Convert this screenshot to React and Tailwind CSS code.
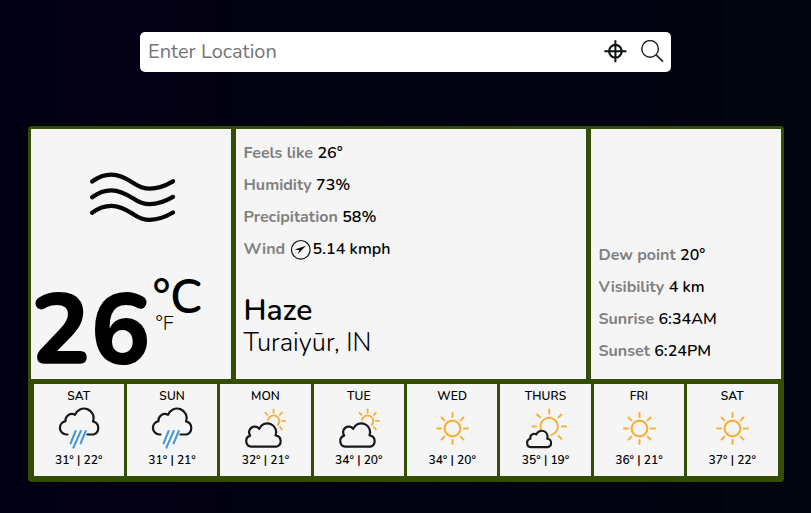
const CLOUD =
  "M9 27.5H8A6.7 6.7 0 0 1 7 14.2A6.5 6.5 0 0 1 16.5 7.8A9.4 9.4 0 0 1 34.5 14.4A6.8 6.8 0 0 1 35 27.5H29";

const RAYS = [0, 45, 90, 135, 180, 225, 270, 315];

function Rain() {
  return (
    <svg width="42" height="42" viewBox="0 0 42 42" fill="none" strokeLinecap="round">
      <path d={CLOUD} transform="translate(.5 0)" stroke="#16181a" strokeWidth="2.2" strokeLinejoin="round" />
      <path d="M17.6 24L12.6 36.3M22.8 24L15.4 40.6M27.8 24L22.6 36.3" stroke="#4a97d2" strokeWidth="2.1" />
    </svg>
  );
}

function Sun() {
  return (
    <svg width="42" height="42" viewBox="0 0 42 42" fill="none" stroke="#f6b03c" strokeLinecap="round">
      <circle cx="21.5" cy="21.5" r="7.9" strokeWidth="2.2" />
      {RAYS.map((a) => (
        <path key={a} d="M21.5 6V10" strokeWidth="2" transform={`rotate(${a} 21.5 21.5)`} />
      ))}
    </svg>
  );
}

function MostlyCloudy() {
  return (
    <svg width="42" height="42" viewBox="0 0 42 42" fill="none" strokeLinecap="round" strokeLinejoin="round">
      <g stroke="#f6b03c" strokeWidth="1.9">
        <path d="M24 13.2A5.7 5.7 0 1 1 33.8 18" />
        <path d="M29.6 2.5V5.7M21.4 5.7L23.3 7.8M37.9 5.7L35.9 7.8M38 13.9H40.9M35.9 20.2L37.8 22.3" />
      </g>
      <path
        d="M7.4 39.7A5.7 5.7 0 0 1 6.2 28.6A5.6 5.6 0 0 1 15.2 21.9A8 8 0 0 1 31.5 28.3A5.8 5.8 0 0 1 32.2 39.7Z"
        stroke="#16181a"
        strokeWidth="2.2"
      />
    </svg>
  );
}

function PartlySunny() {
  return (
    <svg width="42" height="42" viewBox="0 0 42 42" fill="none" strokeLinecap="round" strokeLinejoin="round">
      <g stroke="#f6b03c" strokeWidth="2">
        <path d="M15.8 22A8.7 8.7 0 1 1 26.2 28" />
        <path d="M24.2 2.5V6.5M12.2 7.5L14.9 10.2M36.4 7.5L33.7 10.2M7.2 19.6H11.2M37 19.6H41M33.7 29L36.4 31.7" />
      </g>
      <path
        d="M6.2 40.1A4.2 4.2 0 0 1 5.4 31.8A4 4 0 0 1 11.3 27.4A5.6 5.6 0 0 1 22.2 31.8A4.2 4.2 0 0 1 22.7 40.1Z"
        stroke="#16181a"
        strokeWidth="2.1"
      />
    </svg>
  );
}

const DAYS = [
  { day: "SAT", icon: Rain, t: "31° | 22°" },
  { day: "SUN", icon: Rain, t: "31° | 21°" },
  { day: "MON", icon: MostlyCloudy, t: "32° | 21°" },
  { day: "TUE", icon: MostlyCloudy, t: "34° | 20°" },
  { day: "WED", icon: Sun, t: "34° | 20°" },
  { day: "THURS", icon: PartlySunny, t: "35° | 19°" },
  { day: "FRI", icon: Sun, t: "36° | 21°" },
  { day: "SAT", icon: Sun, t: "37° | 22°" },
];

function Stat({ label, value, children }) {
  return (
    <div className="flex h-8 items-center gap-[4.4px] text-[16px] font-bold">
      <span className="text-[#808080]">{label}</span>
      <div className="flex items-center gap-[2px]">
        {children}
        <span className="font-semibold tracking-[0.05px] text-black">{value}</span>
      </div>
    </div>
  );
}

export default function App() {
  return (
    <main className="flex h-[513px] w-[811px] flex-col items-center overflow-hidden bg-linear-to-r from-[#030014] to-[#00050f] pt-8 font-['Nunito',sans-serif]">
      <div className="flex h-10 w-[531px] items-center rounded-[5px] bg-white pr-[7px] pl-2">
        <span className="text-[20px] leading-10 text-[#757575]">Enter Location</span>
        <svg className="ml-auto" width="24" height="24" viewBox="0 0 24 24" fill="none" stroke="#101314">
          <circle cx="12.4" cy="11.2" r="6.3" strokeWidth="2.2" />
          <path d="M12.4 .2V22.2M1.4 11.2H23.4" strokeWidth="2" />
        </svg>
        <svg className="ml-[13px]" width="24" height="24" viewBox="0 0 24 24" fill="none" stroke="#26292a" strokeWidth="1.5">
          <circle cx="10.1" cy="8.9" r="8.3" />
          <path d="M16.1 14.8L23 21.6" strokeWidth="1.8" />
        </svg>
      </div>

      <section className="mt-[54px] flex h-[356px] w-[756px] flex-col rounded-[4px] bg-[#344d05] p-[3px]">
        <div className="flex h-[250px] gap-[5px]">
          <div className="flex w-[200px] flex-col bg-[#f5f5f5]">
            <svg className="mt-[41px] ml-[57px]" width="90" height="56" viewBox="0 0 90 56" fill="none" stroke="#050708" strokeWidth="4.3" strokeLinecap="round">
              {[0, 15.6, 31.2].map((dy) => (
                <path
                  key={dy}
                  transform={`translate(-.4 ${dy})`}
                  d="M4.5 11.6C10 7.6 16 4.7 23.7 4.7C31 4.7 38 8 45.3 12.7C51 16.6 56 18.6 62.3 18.6C70 18.6 78 15.6 85.4 11.3"
                />
              ))}
            </svg>
            <div className="mt-[42px] flex">
              <span className="mt-px h-[109px] w-[122px] text-[100px] leading-[122px] font-[840]">26</span>
              <div className="flex flex-col">
                <span className="mt-[5px] h-[39px] text-[48px] leading-[48px] font-semibold">°C</span>
                <span className="ml-[3px] text-[20px] leading-[24px] font-light">°F</span>
              </div>
            </div>
          </div>

          <div className="flex w-[350px] flex-col bg-[#f5f5f5] pt-2 pl-2">
            <Stat label="Feels like" value="26°" />
            <Stat label="Humidity" value="73%" />
            <Stat label="Precipitation" value="58%" />
            <Stat label="Wind" value="5.14 kmph">
              <svg width="21" height="21" viewBox="0 0 21 21">
                <circle cx="10.8" cy="10.8" r="9.3" fill="none" stroke="#111" strokeWidth="1.2" />
                <path d="M16 6.8L4.6 10.6L9.4 11.2L7.6 15.2Z" fill="#111" />
              </svg>
            </Stat>
            <span className="mt-[29px] text-[30px] leading-[33px] font-semibold">Haze</span>
            <span className="text-[25.6px] leading-[32px] font-light">Turaiyūr, IN</span>
          </div>

          <div className="flex flex-1 flex-col justify-end bg-[#f5f5f5] pb-3 pl-2">
            <Stat label="Dew point" value="20°" />
            <Stat label="Visibility" value="4 km" />
            <Stat label="Sunrise" value="6:34AM" />
            <Stat label="Sunset" value="6:24PM" />
          </div>
        </div>

        <div className="mx-[3px] mt-[5px] grid h-[92px] grid-cols-8 gap-[3px]">
          {DAYS.map(({ day, icon: Icon, t }, i) => (
            <div key={i} className="flex flex-col items-center bg-[#f5f5f5] text-[12px] font-semibold text-black">
              <span className="mt-1 leading-[16px] tracking-[0.1px]">{day}</span>
              <div className="mt-[3px] h-[42px]"><Icon /></div>
              <span className="mt-[3px] leading-[16px]">{t}</span>
            </div>
          ))}
        </div>
      </section>
    </main>
  );
}
